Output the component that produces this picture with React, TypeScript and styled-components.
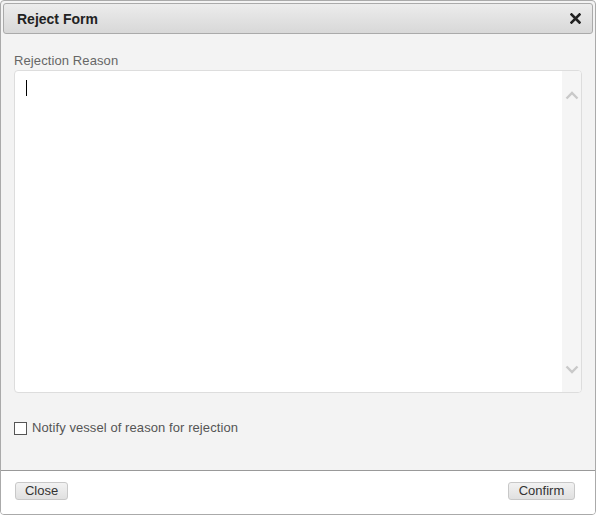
import React from 'react';
import styled, { createGlobalStyle } from 'styled-components';

const GlobalStyle = createGlobalStyle`
  html, body {
    margin: 0;
    padding: 0;
    background: #ffffff;
  }
  * {
    box-sizing: border-box;
  }
`;

const StyledDialog = styled.div`
  width: 596px;
  height: 515px;
  border: 1px solid #aaaaaa;
  border-radius: 4px;
  background-color: #f3f3f3;
  padding: 2px;
  display: flex;
  flex-direction: column;
  font-family: 'Liberation Sans', Arial, sans-serif;
  font-size: 13px;
  overflow: hidden;
`;

const StyledTitleBar = styled.div`
  height: 31px;
  border: 1px solid #aaaaaa;
  border-radius: 3px;
  background: linear-gradient(180deg, #ececec 0%, #d8d8d8 100%);
  display: flex;
  align-items: center;
  justify-content: space-between;
  padding: 0 10px 0 13px;
`;

const StyledTitle = styled.span`
  font-weight: bold;
  color: #222222;
  font-size: 14px;
`;

const StyledCloseIcon = styled.button`
  border: none;
  background: none;
  padding: 0;
  width: 14px;
  height: 14px;
  display: flex;
  align-items: center;
  justify-content: center;
  cursor: pointer;
`;

const StyledBody = styled.div`
  flex: 1;
  display: flex;
  flex-direction: column;
  padding: 19px 11px 0 11px;
`;

const StyledLabel = styled.label`
  color: #666666;
  line-height: 16px;
  margin-bottom: 1px;
  letter-spacing: 0.1px;
`;

const StyledTextBox = styled.div`
  height: 323px;
  border: 1px solid #dddddd;
  border-radius: 4px;
  background-color: #ffffff;
  display: flex;
  overflow: hidden;
`;

const StyledTextArea = styled.div`
  flex: 1;
  padding: 9px 11px;
`;

const StyledCaret = styled.span`
  display: block;
  width: 1px;
  height: 16px;
  background-color: #000000;
`;

const StyledScrollBar = styled.div`
  width: 19px;
  background-color: #f5f5f5;
  display: flex;
  flex-direction: column;
  justify-content: space-between;
  align-items: center;
  padding: 20px 0 18px;
`;

const StyledCheckRow = styled.label`
  display: flex;
  align-items: center;
  gap: 5px;
  margin-top: 27px;
  color: #555555;
  line-height: 16px;
  letter-spacing: 0.08px;
`;

const StyledCheckBox = styled.span`
  width: 13px;
  height: 13px;
  border: 1px solid #555555;
  background-color: #ffffff;
`;

const StyledFooter = styled.div`
  margin: 0 -2px -2px;
  height: 44px;
  border-top: 1px solid #999999;
  background-color: #ffffff;
  display: flex;
  align-items: flex-start;
  justify-content: space-between;
  padding: 11px 20px 0 14px;
`;

const StyledButton = styled.button<{ width: number }>`
  width: ${({ width }) => width}px;
  height: 18px;
  border: 1px solid #c8c8c8;
  border-radius: 3px;
  background: linear-gradient(180deg, #f2f2f2 0%, #e0e0e0 100%);
  font-family: 'Liberation Sans', Arial, sans-serif;
  font-size: 13px;
  color: #333333;
  padding: 0;
  line-height: 16px;
  cursor: pointer;
`;

const Chevron = ({ up }: { up?: boolean }) => (
  <svg width="14" height="9" viewBox="0 0 14 9">
    <path
      d={up ? 'M1.5 7.5 L7 2 L12.5 7.5' : 'M1.5 1.5 L7 7 L12.5 1.5'}
      fill="none"
      stroke="#c9c9c9"
      strokeWidth="2.4"
    />
  </svg>
);

const App = () => (
  <>
    <GlobalStyle />
    <StyledDialog>
      <StyledTitleBar>
        <StyledTitle>Reject Form</StyledTitle>
        <StyledCloseIcon aria-label="close">
          <svg width="11" height="11" viewBox="0 0 11 11">
            <path d="M1.5 1.5 L9.5 9.5 M9.5 1.5 L1.5 9.5" stroke="#222222" strokeWidth="2.6" strokeLinecap="square" />
          </svg>
        </StyledCloseIcon>
      </StyledTitleBar>
      <StyledBody>
        <StyledLabel>Rejection Reason</StyledLabel>
        <StyledTextBox>
          <StyledTextArea>
            <StyledCaret />
          </StyledTextArea>
          <StyledScrollBar>
            <Chevron up />
            <Chevron />
          </StyledScrollBar>
        </StyledTextBox>
        <StyledCheckRow>
          <StyledCheckBox />
          Notify vessel of reason for rejection
        </StyledCheckRow>
      </StyledBody>
      <StyledFooter>
        <StyledButton width={53}>Close</StyledButton>
        <StyledButton width={67}>Confirm</StyledButton>
      </StyledFooter>
    </StyledDialog>
  </>
);

export default App;
